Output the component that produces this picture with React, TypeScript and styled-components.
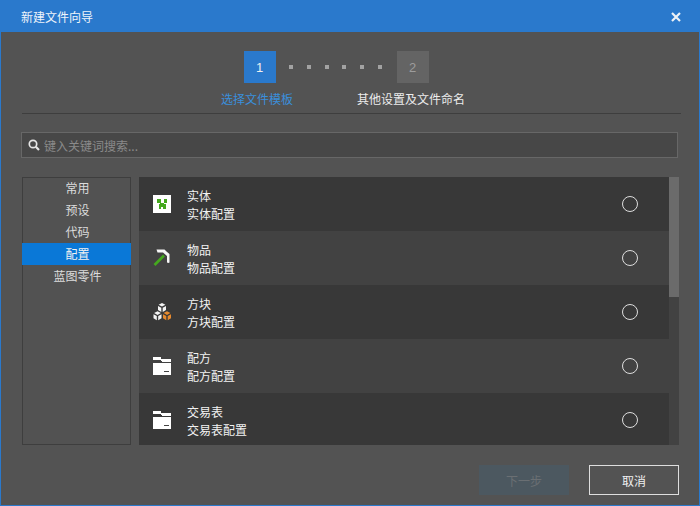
import React from "react";
import styled, { createGlobalStyle } from "styled-components";

const Global = createGlobalStyle`
  html, body { margin: 0; padding: 0; background: #2a79cc; }
  * { box-sizing: border-box; }
`;
const Win = styled.div`
  width: 700px; height: 506px; display: flex; flex-direction: column; overflow: hidden;
  background: #535353; border: 1px solid #2a79cc; border-top: 0;
  font-family: "Noto Sans CJK SC", "Liberation Sans", sans-serif; font-size: 12px; color: #e6e6e6;
`;
const TitleBar = styled.div`
  height: 32px; flex: none; margin: 0 -1px; background: #2a79cc; color: #eef4fb;
  display: flex; align-items: center; justify-content: space-between; padding: 1px 19px 0 21px; line-height: 16px;
`;
const Stepper = styled.div`
  display: flex; padding: 19px 0 0 243px; height: 51px; flex: none;
`;
const StepBox = styled.div<{ $on?: boolean }>`
  width: 32px; height: 32px; display: flex; align-items: center; justify-content: center; padding-right: 1px;
  font-family: "Liberation Sans", sans-serif; font-size: 13px;
  background: ${p => (p.$on ? "#2a79cc" : "#646464")}; color: ${p => (p.$on ? "#f0f0f0" : "#9c9c9c")};
`;
const Dots = styled.div`
  width: 121px; padding: 0 15px 0 13px; display: flex; align-items: center; justify-content: space-between;
`;
const Dot = styled.span`width: 4px; height: 4px; background: #a2a2a2;`;
const Labels = styled.div`
  display: flex; gap: 64px; padding: 8px 0 0 220px; line-height: 16px; height: 30px; flex: none;
`;
const StepLabel = styled.span<{ $on?: boolean }>`color: ${p => (p.$on ? "#3a8fdc" : "#ececec")};`;
const Rule = styled.div`height: 1px; flex: none; background: #3e3e3e; margin: 0 18px 0 21px;`;
const Search = styled.div`
  height: 26px; flex: none; margin: 18px 21px 19px 20px; display: flex; align-items: center; gap: 4px; padding-left: 6px;
  background: #474747; border: 1px solid #676767; color: #8a8a8a;
`;
const Main = styled.div`display: flex; height: 268px; flex: none; margin-left: 21px; gap: 8px;`;
const Side = styled.div`
  width: 109px; background: #525252; box-shadow: inset 0 0 0 1px #3e3e3e; display: flex; flex-direction: column;
`;
const SideItem = styled.div<{ $on?: boolean }>`
  height: 22px; display: flex; align-items: center; justify-content: center; padding: 0 0 2px 2px;
  color: ${p => (p.$on ? "#f2f2f2" : "#dcdcdc")};
  background: ${p => (p.$on ? "#0a78d7" : "transparent")};
`;
const ListWrap = styled.div`width: 540px; display: flex; overflow: hidden; background: #424242;`;
const List = styled.div`flex: 1; display: flex; flex-direction: column; overflow: hidden; min-width: 0;`;
const Row = styled.div<{ $alt?: boolean }>`
  height: 54px; flex: none; display: flex; align-items: center; padding: 0 31px 0 14px;
  background: ${p => (p.$alt ? "#424242" : "#383838")};
`;
const IconBox = styled.div`width: 18px; height: 18px; flex: none; display: flex;`;
const Text = styled.div`flex: 1; margin-left: 16px; line-height: 18px; color: #f2f2f2; padding-top: 2px;`;
const Radio = styled.div`width: 16px; height: 16px; border: 1px solid #dedede; border-radius: 50%; flex: none;`;
const Track = styled.div`width: 10px; flex: none; background: #424242;`;
const Thumb = styled.div`width: 100%; height: 120px; background: #6b6b6b;`;
const Footer = styled.div`display: flex; justify-content: flex-end; gap: 20px; padding: 20px 20px 0 0;`;
const Btn = styled.div<{ $off?: boolean }>`
  width: 90px; height: 30px; display: flex; align-items: center; justify-content: center;
  background: ${p => (p.$off ? "#4c5860" : "transparent")};
  color: ${p => (p.$off ? "#6a6f73" : "#f0f0f0")};
  border: 1px solid ${p => (p.$off ? "#4c5860" : "#dedede")};
`;

const Creeper = () => (
  <svg width="18" height="18" viewBox="0 0 18 18" shapeRendering="crispEdges">
    <rect width="18" height="18" fill="#fff" />
    <path d="M4 4h3.5v3.5H4zM10.5 4H14v3.5h-3.5zM7 7.5h4V9h1.5v5H10v-2H8v2H5.5V9H7z" fill="#45a81e" />
  </svg>
);
const Pick = () => (
  <svg width="18" height="18" viewBox="0 0 18 18">
    <path d="M1.5 16 11 6.5" stroke="#45a81e" strokeWidth="2.6" fill="none" />
    <path d="M3.5.5h8l2 2 3 2.5v8.5l-1 .5-1.5-.5V7L10 3.5H4.5z" fill="#f6f6f6" />
  </svg>
);
const Cube = ({ x, y, c }: { x: number; y: number; c: string }) => (
  <g transform={`translate(${x} ${y})`} fill={c}>
    <path d="M0-4.5 3.4-2.7 0-.9-3.4-2.7z" />
    <path d="M-4-1.6-.7.2V4.4L-4 2.4z" />
    <path d="M4-1.6.7.2V4.4L4 2.4z" />
  </g>
);
const Blocks = () => (
  <svg width="18" height="18" viewBox="0 0 18 18">
    <Cube x={9} y={4.5} c="#f4f4f4" />
    <Cube x={4.5} y={12.8} c="#f4f4f4" />
    <Cube x={14} y={12.8} c="#e88a2e" />
  </svg>
);
const Folder = () => (
  <svg width="18" height="18" viewBox="0 0 18 18" shapeRendering="crispEdges">
    <path d="M0 0h8v2h10v2.5H9L7 3H0z" fill="#fff" />
    <path d="M0 6h18v12H0z" fill="#fff" />
    <rect x="11" y="13.5" width="5" height="1.5" fill="#444" />
  </svg>
);
const Mag = () => (
  <svg width="12" height="12" viewBox="0 0 12 12" fill="none" stroke="#e6e6e6">
    <circle cx="5" cy="5" r="3.7" strokeWidth="1.7" />
    <path d="M7.8 7.8 11 11" strokeWidth="2.2" />
  </svg>
);
const Close = () => (
  <svg width="10" height="10" viewBox="0 0 10 10" stroke="#eef2f6" strokeWidth="2.2">
    <path d="M1 1 9 9M9 1 1 9" />
  </svg>
);

const rows = [
  { name: "实体", sub: "实体配置", icon: <Creeper /> },
  { name: "物品", sub: "物品配置", icon: <Pick /> },
  { name: "方块", sub: "方块配置", icon: <Blocks /> },
  { name: "配方", sub: "配方配置", icon: <Folder /> },
  { name: "交易表", sub: "交易表配置", icon: <Folder /> },
];
const side = ["常用", "预设", "代码", "配置", "蓝图零件"];

export default function App() {
  return (
    <Win>
      <Global />
      <TitleBar>
        <span>新建文件向导</span>
        <Close />
      </TitleBar>
      <Stepper>
        <StepBox $on>1</StepBox>
        <Dots>{[0, 1, 2, 3, 4, 5].map(i => <Dot key={i} />)}</Dots>
        <StepBox>2</StepBox>
      </Stepper>
      <Labels>
        <StepLabel $on>选择文件模板</StepLabel>
        <StepLabel>其他设置及文件命名</StepLabel>
      </Labels>
      <Rule />
      <Search>
        <Mag />
        <span>键入关键词搜索...</span>
      </Search>
      <Main>
        <Side>
          {side.map(s => <SideItem key={s} $on={s === "配置"}>{s}</SideItem>)}
        </Side>
        <ListWrap>
          <List>
            {rows.map((r, i) => (
              <Row key={r.name} $alt={i % 2 === 1}>
                <IconBox>{r.icon}</IconBox>
                <Text>
                  <div>{r.name}</div>
                  <div>{r.sub}</div>
                </Text>
                <Radio />
              </Row>
            ))}
          </List>
          <Track><Thumb /></Track>
        </ListWrap>
      </Main>
      <Footer>
        <Btn $off>下一步</Btn>
        <Btn>取消</Btn>
      </Footer>
    </Win>
  );
}
